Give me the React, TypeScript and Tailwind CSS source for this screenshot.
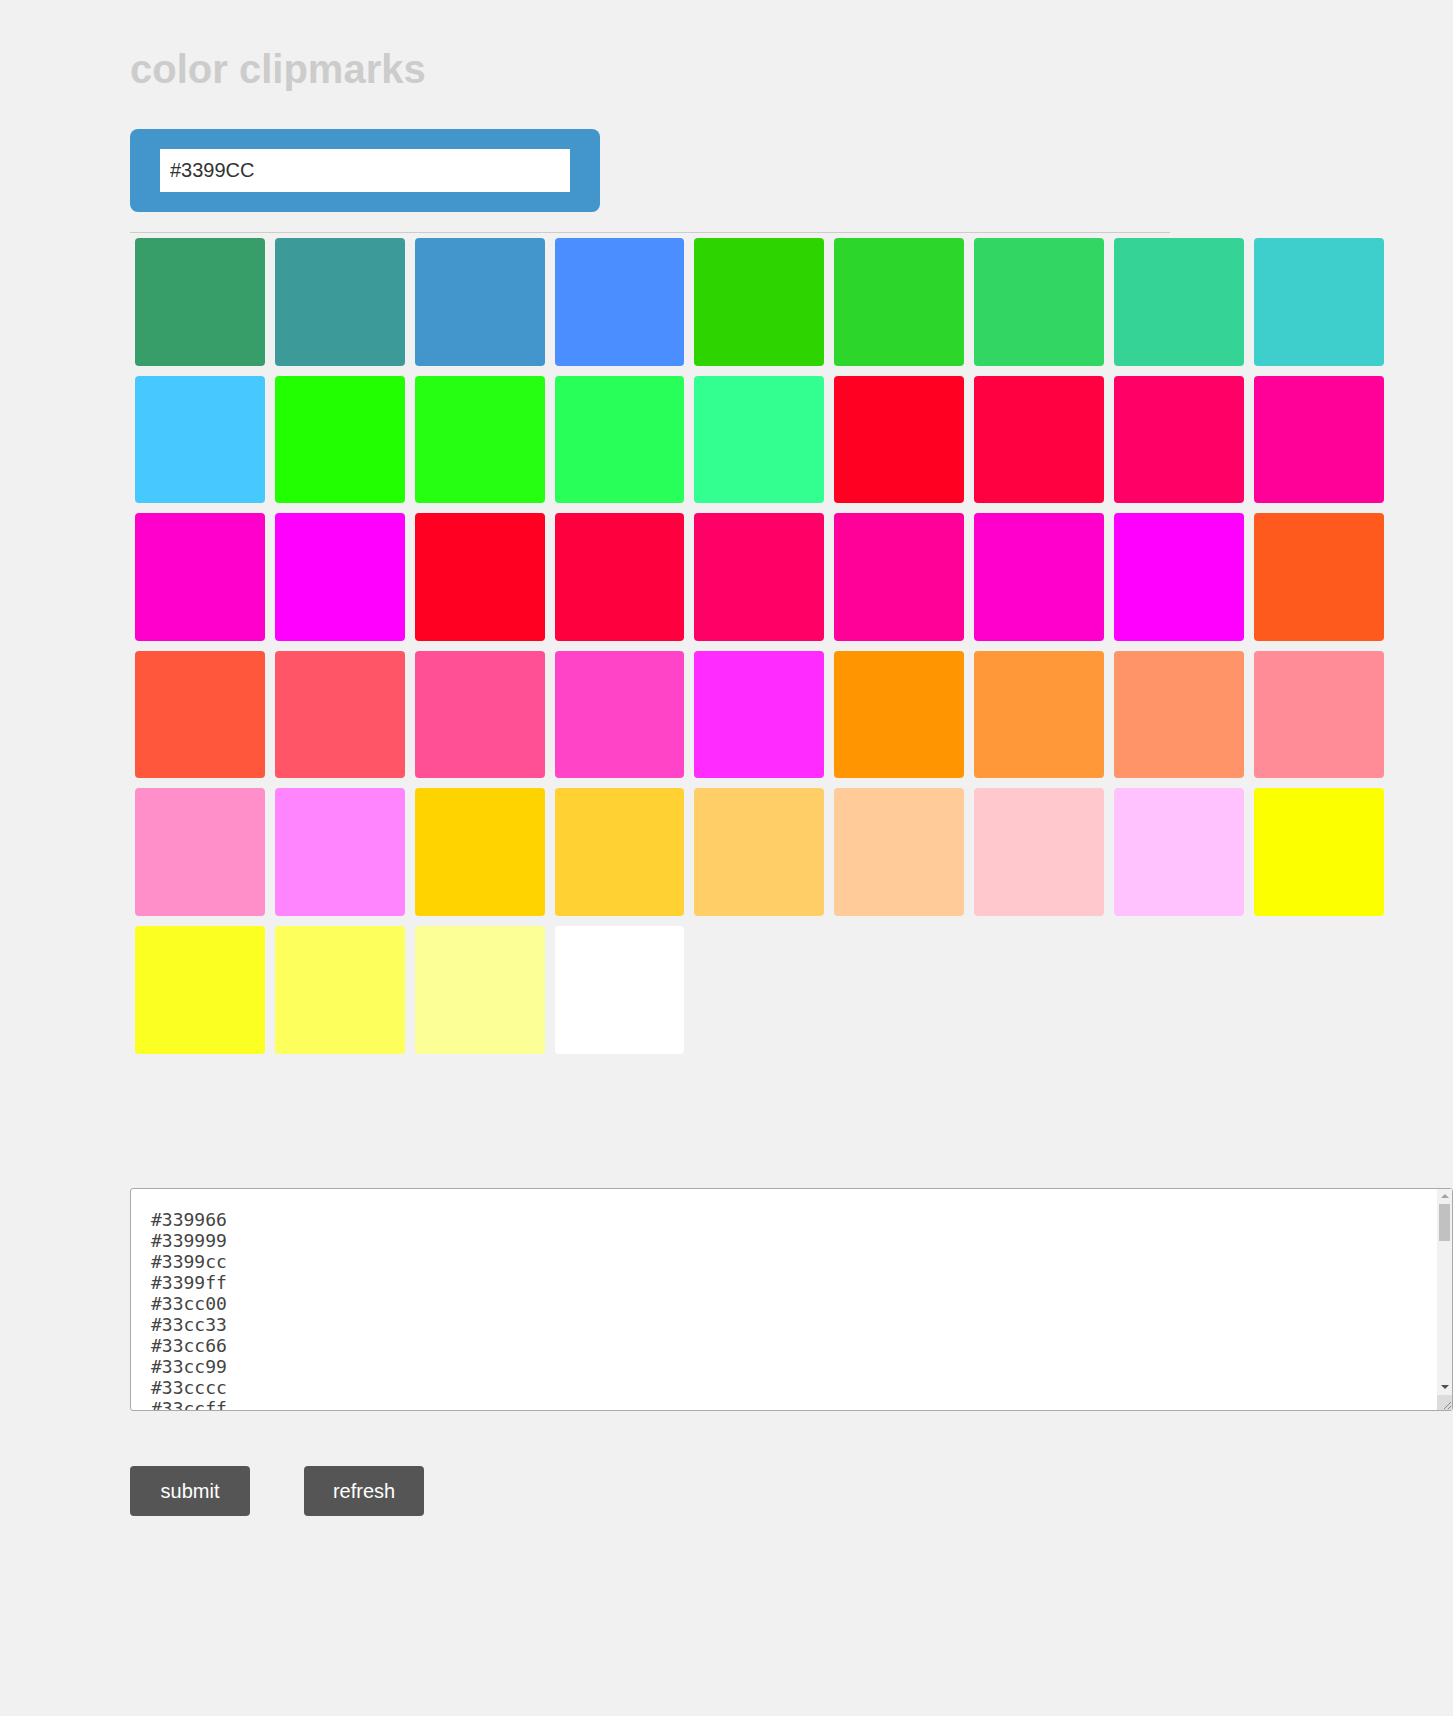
import React, { useState } from 'react';

const swatches: string[] = [
  '#379e6a', '#3c9b98', '#4296cc', '#4a8eff', '#2dd400', '#2dd62b', '#32d662', '#36d396', '#3ecfcc',
  '#47c8ff', '#22ff00', '#26ff11', '#28ff58', '#33ff90', '#ff0022', '#ff0040', '#ff0066', '#ff0099',
  '#ff00cc', '#ff00ff', '#ff0022', '#ff003f', '#ff0066', '#ff0099', '#ff00cc', '#ff00ff', '#ff5a1e',
  '#ff573b', '#ff5566', '#ff5096', '#ff44c8', '#ff2bff', '#ff9500', '#ff9838', '#ff9468', '#ff8c96',
  '#ff8fc8', '#ff85ff', '#ffd300', '#ffd133', '#ffce66', '#ffcc99', '#ffc8cc', '#ffc2ff', '#fcff00',
  '#fcff22', '#fcff5c', '#fbff96', '#ffffff',
];

// websafe values shown in the list
const listed = [
  '#339966', '#339999', '#3399cc', '#3399ff', '#33cc00', '#33cc33', '#33cc66', '#33cc99', '#33cccc',
  '#33ccff', '#33ff00', '#33ff33', '#33ff66', '#33ff99', '#ff0033', '#ff0066', '#ff0066', '#ff0099',
  '#ff00cc', '#ff00ff', '#ff0033', '#ff0033', '#ff0066', '#ff0099', '#ff00cc', '#ff00ff', '#ff6633',
  '#ff6633', '#ff6666', '#ff6699', '#ff66cc', '#ff33ff', '#ff9900', '#ff9933', '#ff9966', '#ff9999',
  '#ff99cc', '#ff99ff', '#ffcc00', '#ffcc33', '#ffcc66', '#ffcc99', '#ffcccc', '#ffccff', '#ffff00',
  '#ffff33', '#ffff66', '#ffff99', '#ffffff',
];

// drawn scrollbar, the browser here hides the native one
const FakeScrollbar = () => (
  <div className="absolute top-px right-px bottom-px w-[15px] flex flex-col bg-[#f1f1f1] pointer-events-none">
    <div className="h-[15px] flex items-center justify-center">
      <div className="w-0 h-0 border-x-[4px] border-x-transparent border-b-[4px] border-b-[#a3a3a3]" />
    </div>
    <div className="flex-1 px-[2px]">
      <div className="h-[37px] bg-[#c1c1c1]" />
    </div>
    <div className="h-[15px] flex items-center justify-center">
      <div className="w-0 h-0 border-x-[4px] border-x-transparent border-t-[4px] border-t-[#505050]" />
    </div>
    <div className="h-[15px] bg-[#dcdcdc]">
      <svg width="15" height="15" viewBox="0 0 15 15">
        <path d="M14 7 L7 14 M14 11 L11 14" stroke="#8a8a8a" strokeWidth="1" />
      </svg>
    </div>
  </div>
);

const App: React.FC = () => {
  const [hex, setHex] = useState('#3399CC');
  const [text, setText] = useState(listed.join('\n'));

  return (
    <div className="min-h-[1716px] bg-[#f1f1f1] pl-[130px] pt-[46px] font-['Liberation_Sans',Arial,sans-serif]">
      <h1 className="text-[40px] leading-[46px] font-bold text-[#cccccc]">color clipmarks</h1>

      <div className="mt-[37px] w-[470px] h-[83px] rounded-lg bg-[#4296cc] pt-[20px] pl-[30px]">
        <input
          value={hex}
          onChange={(e) => setHex(e.target.value)}
          className="w-[410px] h-[43px] bg-white px-[10px] text-[20px] text-[#333] outline-none"
        />
      </div>

      <hr className="mt-[20px] w-[1040px] border-0 border-t border-[#cccccc]" />

      <div className="flex flex-wrap w-[1260px]">
        {swatches.map((c, i) => (
          <div
            key={i}
            className="m-[5px] w-[129.85px] h-[127.6px] rounded-[4px] cursor-pointer"
            style={{ backgroundColor: c }}
          />
        ))}
      </div>

      <div className="relative mt-[129px] w-[1323px] h-[223px]">
        <textarea
          value={text}
          onChange={(e) => setText(e.target.value)}
          className="block w-full h-full resize-none rounded-[3px] border border-[#a9a9a9] bg-white p-[20px] pr-[36px] font-['DejaVu_Sans_Mono',monospace] text-[18px] leading-[21px] text-[#444] outline-none overflow-y-hidden"
        />
        <FakeScrollbar />
      </div>

      <div className="mt-[55px] flex gap-[54px]">
        <button className="w-[120px] h-[50px] rounded-[4px] bg-[#555555] text-[20px] text-white">submit</button>
        <button className="w-[120px] h-[50px] rounded-[4px] bg-[#555555] text-[20px] text-white">refresh</button>
      </div>
    </div>
  );
};

export default App;
